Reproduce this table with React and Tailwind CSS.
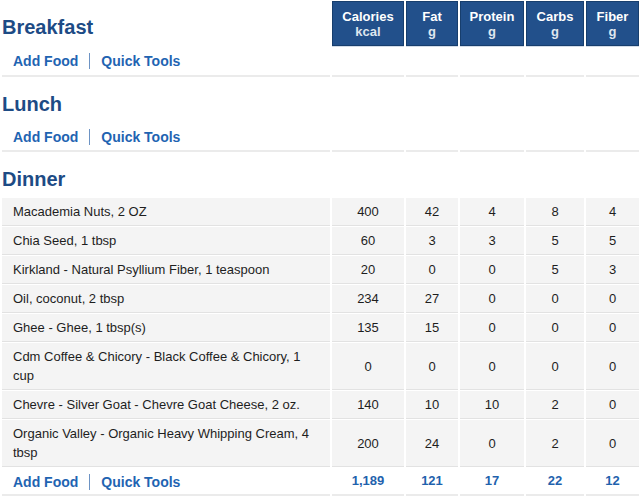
import React from "react";

const COLS = "grid grid-cols-[328px_72px_52px_64px_58px_53px] gap-x-[2px] pl-[2px]";

const rows = [
  ["Macademia Nuts, 2 OZ", 400, 42, 4, 8, 4],
  ["Chia Seed, 1 tbsp", 60, 3, 3, 5, 5],
  ["Kirkland - Natural Psyllium Fiber, 1 teaspoon", 20, 0, 0, 5, 3],
  ["Oil, coconut, 2 tbsp", 234, 27, 0, 0, 0],
  ["Ghee - Ghee, 1 tbsp(s)", 135, 15, 0, 0, 0],
  ["Cdm Coffee & Chicory - Black Coffee & Chicory, 1 cup", 0, 0, 0, 0, 0],
  ["Chevre - Silver Goat - Chevre Goat Cheese, 2 oz.", 140, 10, 10, 2, 0],
  ["Organic Valley - Organic Heavy Whipping Cream, 4 tbsp", 200, 24, 0, 2, 0],
];

const headers = [
  ["Calories", "kcal"],
  ["Fat", "g"],
  ["Protein", "g"],
  ["Carbs", "g"],
  ["Fiber", "g"],
];

function Title({ children, h }) {
  return (
    <div
      className={`${h} pt-[15px] text-[20px] leading-[24px] font-bold text-[#1d4b85]`}
    >
      {children}
    </div>
  );
}

function Links() {
  return (
    <div className="flex items-center pl-[11px] text-[14px] leading-[20px] font-bold text-[#1f64b2]">
      <span>Add Food</span>
      <span className="mx-[11px] h-[16px] border-l border-[#6d93c4]"></span>
      <span>Quick Tools</span>
    </div>
  );
}

function LinkRow({ pt = "pt-[3px]" }) {
  return (
    <div className={`${COLS} mt-[2px]`}>
      <div className={`h-[28px] ${pt} border-b-2 border-[#ebebeb]`}>
        <Links />
      </div>
      {[0, 1, 2, 3, 4].map((i) => (
        <div key={i} className="h-[28px] border-b-2 border-[#ebebeb]"></div>
      ))}
    </div>
  );
}

export default function App() {
  return (
    <div className="w-[639px] h-[500px] overflow-hidden bg-white font-['Liberation_Sans',Arial,sans-serif]">
      {/* Breakfast + header */}
      <div className={`${COLS} h-[47px]`}>
        <Title h="h-[47px]">Breakfast</Title>
        {headers.map(([a, b]) => (
          <div
            key={a}
            className="mt-[1px] h-[45px] bg-[#22508b] border border-[#173e6d] shadow-[0_1px_0_#d3dce8] flex flex-col items-center justify-center text-[13px] leading-[15px] font-bold"
          >
            <span className="text-white">{a}</span>
            <span className="text-[#dfe6ef]">{b}</span>
          </div>
        ))}
      </div>
      <LinkRow pt="pt-[2px]" />

      {/* Lunch */}
      <div className={COLS}>
        <Title h="h-[45px]">Lunch</Title>
      </div>
      <LinkRow />

      {/* Dinner */}
      <div className={COLS}>
        <Title h="h-[46px]">Dinner</Title>
      </div>

      <div className="flex flex-col gap-y-[1px]">
        {rows.map((r) => (
          <div key={r[0]} className={COLS}>
            <div className="bg-[#f4f4f4] border-b border-[#e2e2e2] pl-[11px] pr-[17px] py-[4px] text-[13px] leading-[19px] text-[#1e1e1e]">
              {r[0]}
            </div>
            {r.slice(1).map((v, i) => (
              <div
                key={i}
                className="bg-[#f4f4f4] border-b border-[#e2e2e2] flex items-center justify-center text-[13px] leading-[19px] text-[#1e1e1e]"
              >
                {v}
              </div>
            ))}
          </div>
        ))}
      </div>

      {/* Footer totals */}
      <div className={`${COLS} mt-[1px]`}>
        <div className="h-[28px] pt-[4px] border-b-2 border-[#ebebeb]">
          <Links />
        </div>
        {["1,189", "121", "17", "22", "12"].map((v) => (
          <div
            key={v}
            className="h-[28px] border-b-2 border-[#ebebeb] flex items-center justify-center text-[13px] font-bold text-[#1f62ad]"
          >
            {v}
          </div>
        ))}
      </div>
    </div>
  );
}
